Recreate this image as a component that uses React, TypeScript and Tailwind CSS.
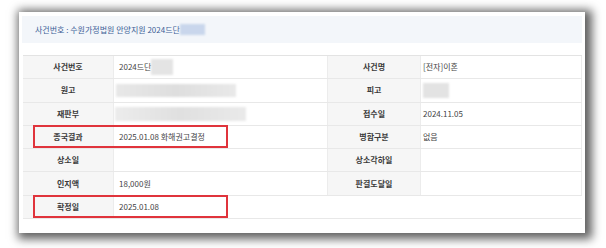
import type { ReactNode } from 'react';

const font = '"Noto Sans CJK KR", "Noto Sans", sans-serif';

// Blurred placeholder used where personal info is masked
function Masked({ className }: { className: string }) {
  return <span className={`inline-block blur-[0.8px] ${className}`} />;
}

function Label({ children, w }: { children?: ReactNode; w: string }) {
  return (
    <div
      className={`${w} h-full flex items-center justify-center bg-[#f6f6f6] text-[8px] font-semibold text-[#3a3a3a] border-r border-[#ececec]`}
    >
      {children}
    </div>
  );
}

function Value({
  children,
  w,
  pl = 'pl-[5px]',
  edge = true,
}: {
  children?: ReactNode;
  w: string;
  pl?: string;
  edge?: boolean;
}) {
  return (
    <div
      className={`${w} h-full flex items-center ${pl} text-[8px] text-[#444] ${edge ? 'border-r border-[#ececec]' : ''}`}
    >
      {children}
    </div>
  );
}

interface Row {
  l1: string;
  v1?: ReactNode;
  l2?: string;
  v2?: ReactNode;
  marked?: boolean;
}

const rows: Row[] = [
  {
    l1: '사건번호',
    v1: (
      <span className="flex items-center">
        2024드단
        <Masked className="w-[22px] h-[16px] bg-[#e4e4e4]" />
      </span>
    ),
    l2: '사건명',
    v2: '[전자]이혼',
  },
  {
    l1: '원고',
    v1: <Masked className="-ml-[3px] w-[120px] h-[13px] bg-gradient-to-r from-[#e8e8e8] via-[#dedede] to-[#e9e9e9]" />,
    l2: '피고',
    v2: <Masked className="w-[26px] h-[15px] bg-[#e3e3e3]" />,
  },
  {
    l1: '재판부',
    v1: <Masked className="-ml-[4px] w-[131px] h-[14px] bg-gradient-to-r from-[#ececec] via-[#e0e0e0] to-[#eaeaea]" />,
    l2: '접수일',
    v2: '2024.11.05',
  },
  { l1: '종국결과', v1: '2025.01.08 화해권고결정', l2: '병합구분', v2: '없음', marked: true },
  { l1: '상소일', l2: '상소각하일' },
  { l1: '인지액', v1: '18,000원', l2: '판결도달일' },
  { l1: '확정일', v1: '2025.01.08', marked: true },
];

export default function App() {
  return (
    <div className="w-[606px] h-[248px] bg-white pl-[19px] pt-[12px]" style={{ fontFamily: font }}>
      <div className="w-[566px] h-[221px] bg-white shadow-[3px_2px_9px_4px_rgba(0,0,0,0.62)] px-[3px] pt-[4px]">
        {/* case number header */}
        <div className="h-[27px] bg-[#f3f6fa] flex items-center pl-[13px] text-[8px] text-[#3d5f97]">
          사건번호 : 수원가정법원 안양지원 2024드단
          <Masked className="w-[25px] h-[11px] bg-[#c9d6ec]" />
        </div>

        {/* detail table */}
        <div className="mt-[12px] ml-[1px] w-[559px] border-t border-[#e3e3e3]">
          {rows.map((r) => (
            <div key={r.l1} className="h-[23.3px] flex border-b border-[#e8e8e8]">
              <div className="relative flex h-full">
                <Label w="w-[91px]">{r.l1}</Label>
                <Value w="w-[214px]" edge={!!r.l2}>
                  {r.v1}
                </Value>
                {r.marked && (
                  <div className="absolute left-[10px] right-[100px] top-[-1px] bottom-0 border-2 border-[#e0343c]" />
                )}
              </div>
              {r.l2 ? (
                <>
                  <Label w="w-[93px]">{r.l2}</Label>
                  <Value w="w-[161px]" pl="pl-[2px]">
                    {r.v2}
                  </Value>
                </>
              ) : null}
            </div>
          ))}
        </div>
      </div>
    </div>
  );
}
